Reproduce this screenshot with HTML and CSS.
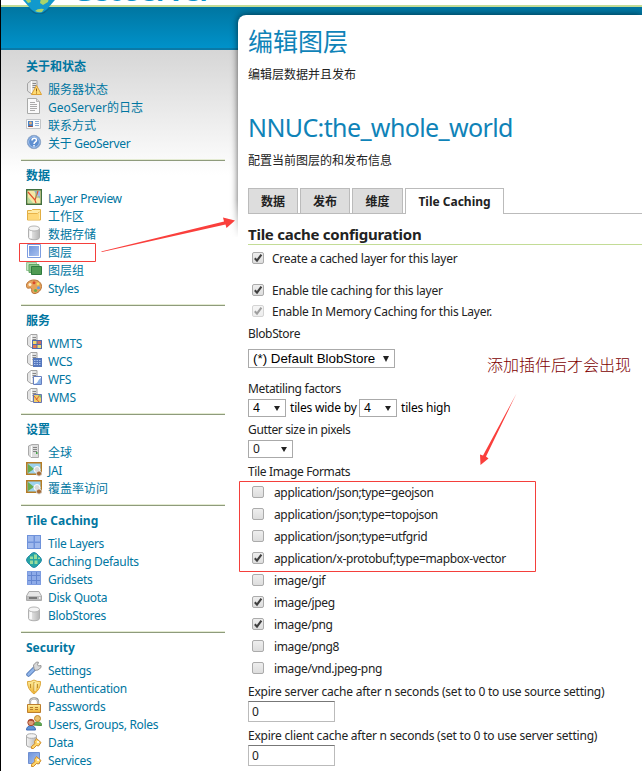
FILE: index.html
```html
<!DOCTYPE html>
<html lang="zh">
<head>
<meta charset="utf-8">
<title>GeoServer</title>
<link rel="stylesheet" href="styles.css">
</head>
<body>
<svg class="defs" width="0" height="0">
  <defs>
    <linearGradient id="gBlue" x1="0" y1="0" x2="1" y2="1"><stop offset="0" stop-color="#6f94da"/><stop offset="1" stop-color="#a9c2f0"/></linearGradient>
    <linearGradient id="gGrey" x1="0" y1="0" x2="1" y2="0"><stop offset="0" stop-color="#f4f4f4"/><stop offset="1" stop-color="#b4b4b4"/></linearGradient>
    <linearGradient id="gGold" x1="0" y1="0" x2="0" y2="1"><stop offset="0" stop-color="#fff0a0"/><stop offset="1" stop-color="#eeb030"/></linearGradient>
    <linearGradient id="gBox" x1="0" y1="0" x2="0" y2="1"><stop offset="0" stop-color="#efefef"/><stop offset="1" stop-color="#dcdcdc"/></linearGradient>
  </defs>
  <symbol id="server" viewBox="0 0 16 16"><path d="M1.500 3.500 5 .5h6v13H5L1.500 11z" fill="#e4e4e4" stroke="#a4a4a4"/><path d="M5.500 1v12" stroke="#fff"/><path d="M6.500 3.500h3.500M6.500 5.500h3.500M6.500 7.500h3.500" stroke="#888"/></symbol>
  <symbol id="status" viewBox="0 0 16 16"><use href="#server"/><path d="M10.500 5.500 15.500 14.500H5.500z" fill="#ffdc72" stroke="#dda034" stroke-linejoin="round"/><path d="M10.500 8.500v3M10.500 12.500v1" stroke="#8c5b14"/></symbol>
  <symbol id="page" viewBox="0 0 16 16"><path d="M1.500.5h9l3 3v12h-12z" fill="#fafafa" stroke="#a9aaa9"/><path d="M10.500.5v3h3" fill="#ddd" stroke="#b5b5b5"/><path d="M4 4.500h5M4 6.500h7M4 8.500h7M4 10.500h7M4 12.500h5" stroke="#aaa"/></symbol>
  <symbol id="card" viewBox="0 0 16 16"><path d="M.5 3.500h14v9H.5z" fill="#fafafa" stroke="#c2c5c8"/><path d="M2 5h5v6H2z" fill="#4580c6"/><circle cx="4.500" cy="7" r="1.500" fill="#e4b07c"/><path d="M2.500 10.500h4" stroke="#a44b31"/><path d="M9 5.500h4M9 7.500h4M9 9.500h4" stroke="#8bacd3"/></symbol>
  <symbol id="help" viewBox="0 0 16 16"><circle cx="8" cy="8" r="6.700" fill="#5f8fd0" stroke="#93a9c8"/><circle cx="8" cy="8" r="5.400" fill="none" stroke="#a9c5ec"/><path d="M6 6.500c0-3 4.500-3 4.500-.3C10.500 8 8 7.800 8 10M8 11v1.500" fill="none" stroke="#fff" stroke-width="1.500"/></symbol>
  <symbol id="preview" viewBox="0 0 16 16"><path d="M.7.7h14.600v14.600H.7z" fill="#f4e8a6" stroke="#426f3e" stroke-width="1.400"/><path d="M8 2h6v8z" fill="#9dbbe8"/><path d="M2 8l5 6H2z" fill="#b5dca0"/><path d="M2 3l7 8 1 3M12 2l-3 9" fill="none" stroke="#de512e" stroke-width="1.200"/><path d="M10 2v6h4" fill="none" stroke="#8fb07a"/></symbol>
  <symbol id="folder" viewBox="0 0 16 16"><path d="M1.500 13V3.500h4l1-1h8V13z" fill="#ffeaa5" stroke="#e2ae42"/><path d="M1.500 6.500h10l2-1.500" fill="none" stroke="#e8b34a"/><path d="M2 7h11v5.500H2z" fill="#ffd878"/></symbol>
  <symbol id="store" viewBox="0 0 16 16"><path d="M2.500 3.500v9c0 3 11 3 11 0v-9" fill="url(#gGrey)" stroke="#b0b0b0"/><ellipse cx="8" cy="3.500" rx="5.500" ry="2.500" fill="#f4f4f4" stroke="#b5b5b5"/><path d="M5 6v7" stroke="#fff" stroke-width="1.500"/></symbol>
  <symbol id="layer" viewBox="0 0 16 16"><path d="M1.500 1.500h13v13h-13z" fill="#fff" stroke="#7d9ce0"/><path d="M3 3h10v10H3z" fill="url(#gBlue)"/></symbol>
  <symbol id="layers" viewBox="0 0 16 16"><path d="M.5 1.500h10v8H.5z" fill="#c4e5bf" stroke="#98c79a"/><path d="M3 3.500h10v8H3z" fill="#8ac489" stroke="#62a864"/><path d="M5.500 5.500h10v8h-10z" fill="#509b53" stroke="#307b3e"/></symbol>
  <symbol id="palette" viewBox="0 0 16 16"><path d="M8 1C3 1 0 4 .5 7.500 1 10 3 9 4.500 9c2.500 0 0 3 2 5 2.500 2 9-1.500 9-6.500C15.500 3.500 12 1 8 1z" fill="#e6a25b" stroke="#b87335"/><circle cx="4" cy="5.500" r="1.500" fill="#fff2d7"/><circle cx="8" cy="3.700" r="1.500" fill="#d94b2b"/><circle cx="12" cy="5" r="1.400" fill="#f5dd5b"/><circle cx="12.500" cy="8.700" r="1.500" fill="#609ce0"/><circle cx="9.500" cy="11.500" r="1.600" fill="#70ad47"/></symbol>
  <symbol id="wmts" viewBox="0 0 16 16"><use href="#server"/><path d="M6 6h10v9H6z" fill="#526cad"/><path d="M7 7h3.500v3H7z" fill="#f2d96a"/><path d="M11.500 7H15v3h-3.500z" fill="#ce7062"/><path d="M7 11h3.500v3H7z" fill="#e4794e"/><path d="M11.500 11H15v3h-3.500z" fill="#eee077"/></symbol>
  <symbol id="wcs" viewBox="0 0 16 16"><use href="#server"/><path d="M7 6h9v9H7z" fill="#5577bd"/><path d="M8 8.500h7M8 10.500h7M8 12.500h7" stroke="#a9c2ee" stroke-dasharray="1.500 1"/></symbol>
  <symbol id="wfs" viewBox="0 0 16 16"><use href="#server"/><path d="M7.500 6.500h8v8h-8z" fill="#fff" stroke="#667fc0"/><path d="M15 8v6H8c5-1 3-4 7-6z" fill="#8db2e7"/></symbol>
  <symbol id="wms" viewBox="0 0 16 16"><use href="#server"/><path d="M7.500 6.500h8v8h-8z" fill="#f1cf67" stroke="#6573b3"/><path d="M8 8l5 6M14 7l-4 5" stroke="#d95b35"/><path d="M12 7h3v3z" fill="#7dbe78"/></symbol>
  <symbol id="host" viewBox="0 0 16 16"><path d="M2.500 3 6 1.500h6.500v13H5L2.500 12z" fill="#ddd" stroke="#aaa"/><path d="M5.500 3v11" stroke="#fff"/><path d="M7 4.500h4M7 6.500h4M7 8.500h4" stroke="#858585"/><path d="M10 9h1.500v2H10z" fill="#43a547"/></symbol>
  <symbol id="jai" viewBox="0 0 16 16"><path d="M.8 1.800h14.500v11.500H.8z" fill="#9cd2ed" stroke="#b57c25" stroke-width="1.600"/><path d="M2 3l6 5-6 4z" fill="#67ad50"/><circle cx="11" cy="8.500" r="3" fill="#d8d8d8" stroke="#fff"/><circle cx="13" cy="12.500" r="2.600" fill="#a66b37" stroke="#ddd"/></symbol>
  <symbol id="tiles" viewBox="0 0 16 16"><path d="M1 1h14v14H1z" fill="#6f92da"/><path d="M2 2h5.500v5.500H2zM9 2h5v5.500H9zM2 9h5.500v5H2zM9 9h5v5H9z" fill="#9fb9ed"/></symbol>
  <symbol id="caching" viewBox="0 0 16 16"><path d="M8 .5Q10 .5 12.500 3.500 15.500 6 15.500 8T12.500 12.500Q10 15.500 8 15.500T3.500 12.500Q.5 10 .5 8T3.500 3.500Q6 .5 8 .5z" fill="#27a5a2" stroke="#2189a8"/><path d="M4 4.500h3v2.500H4zM8 2.500h3V7H8zM4 8.500h3V12H4zM8.500 8.500h3V12h-3zM12 5.500h2V7h-2z" fill="#99dc9c"/></symbol>
  <symbol id="grid" viewBox="0 0 16 16"><path d="M1 1h14v14H1z" fill="#8eabe8"/><path d="M1 5.500h14M1 10.500h14M5.500 1v14M10.500 1v14" stroke="#6486d0"/><path d="M1.500 1.500h13v13h-13z" fill="none" stroke="#7d9ce0"/></symbol>
  <symbol id="disk" viewBox="0 0 16 16"><path d="M.5 8 3 3.500h10L15.500 8v4.500H.5z" fill="#e6e6e6" stroke="#aaa"/><path d="M1 8h14v4H1z" fill="#bbb"/><path d="M3 10h8" stroke="#777" stroke-width="2"/><path d="M13 9h1.500v2H13z" fill="#eee"/></symbol>
  <symbol id="wrench" viewBox="0 0 16 16"><path d="M2.500 13.500 9 7" stroke="#537ab7" stroke-width="4.500" stroke-linecap="round"/><path d="M2.500 13.500 9 7" stroke="#8fb4e9" stroke-width="2.600" stroke-linecap="round"/><path d="M8 7.500 7.500 4l3-3 2 .3-1 2.500 1 1.200L15 4.500v2l-3 2.500-3 .3z" fill="#d9d9d9" stroke="#959595"/></symbol>
  <symbol id="shield" viewBox="0 0 16 16"><path d="M1.500 2.500Q5 3 8 1q3 2 6.500 1.500Q15 10 8 15 1 10 1.500 2.500z" fill="url(#gGold)" stroke="#dda83b"/><path d="M8 3v9.500M4.500 5v4M11.500 5v4" stroke="#bb8e30"/><path d="M9 4v8" stroke="#fff9d2"/></symbol>
  <symbol id="lock" viewBox="0 0 16 16"><path d="M4 8V4.500C4 .2 12 .2 12 4.500V8" fill="none" stroke="#929292" stroke-width="2.200"/><path d="M4 7V4.500C4 .8 12 .8 12 4.500V7" fill="none" stroke="#dedede"/><path d="M1.500 7.500h13v8h-13z" fill="url(#gGold)" stroke="#bd7e2d"/><path d="M4 10.500h3M4 12.500h3M9 10.500h3M9 12.500h3" stroke="#b47b2a"/></symbol>
  <symbol id="users" viewBox="0 0 16 16"><path d="M7.500 10c0-4 8-4 8-.5v1z" fill="#66ad53" stroke="#478c3d"/><circle cx="11.500" cy="3.500" r="3" fill="#eac16d" stroke="#be852d"/><path d="M.5 15c0-6 9-6 9 0z" fill="#5f94d7" stroke="#3c68b4"/><circle cx="5" cy="7.500" r="3.200" fill="#df9e78" stroke="#a7472f"/><path d="M2 7c1-3 5-3 6 0-2-1-4-2-6 0z" fill="#a13f2b"/></symbol>
  <symbol id="key" viewBox="0 0 16 16"><path d="m10.500 5.500 4.500 4-2.500 3.500-2-.5-3 3H5.500v-2l3.500-3-.5-2z" fill="#ffd66a" stroke="#ce8b2a"/><circle cx="12" cy="9" r="1" fill="#fff"/></symbol>
  <symbol id="data" viewBox="0 0 16 16"><path d="M.5 3v9c0 3 10 3 10 0V3" fill="url(#gGrey)" stroke="#aaa"/><ellipse cx="5.500" cy="3" rx="5" ry="2.300" fill="#f4f4f4" stroke="#aaa"/><use href="#key"/></symbol>
  <symbol id="services" viewBox="0 0 16 16"><path d="M2.500 1.500h11v11h-11z" fill="url(#gBlue)" stroke="#6e8fd1"/><use href="#key"/></symbol>
  <symbol id="box" viewBox="0 0 12 12"><rect x=".5" y=".5" width="11" height="11" rx="1.500" fill="url(#gBox)" stroke="#ababab"/></symbol>
  <symbol id="tick" viewBox="0 0 12 12"><use href="#box"/><path d="M2.800 6.200 5 8.600 9.400 2.600" fill="none" stroke="#3f3f3f" stroke-width="2.100"/></symbol>
</svg>

<header class="top">
  <svg class="globe" viewBox="0 0 44 28"><path d="M0 7 13 22Q22 32 31 22L44 7z" fill="#1199cd"/><path d="M10 21 14 24Q22 31 30 24L34 21 31 24Q22 33 13 24z" fill="#0b6289"/><path d="M7 12h6l1 4-3 1zM24 12h8l-1 4-5 3-3-2zM18 25q3-3 9-2l-2 3q-3 1-7-1z" fill="#a8d46a"/></svg>
  <span class="brand">GeoServer</span>
</header>
<div class="band"></div>

<div class="page">
  <nav class="side">
    <section><h2>关于和状态</h2><ul>
      <li><svg><use href="#status"/></svg><a class="cn">服务器状态</a></li>
      <li><svg><use href="#page"/></svg><a class="cn">GeoServer的日志</a></li>
      <li><svg><use href="#card"/></svg><a class="cn">联系方式</a></li>
      <li><svg><use href="#help"/></svg><a>关于 GeoServer</a></li></ul></section>
    <section><h2>数据</h2><ul>
      <li><svg><use href="#preview"/></svg><a>Layer Preview</a></li>
      <li><svg><use href="#folder"/></svg><a class="cn">工作区</a></li>
      <li><svg><use href="#store"/></svg><a class="cn">数据存储</a></li>
      <li><svg><use href="#layer"/></svg><a class="cn">图层</a></li>
      <li><svg><use href="#layers"/></svg><a class="cn">图层组</a></li>
      <li><svg><use href="#palette"/></svg><a>Styles</a></li></ul></section>
    <section><h2>服务</h2><ul>
      <li><svg><use href="#wmts"/></svg><a>WMTS</a></li>
      <li><svg><use href="#wcs"/></svg><a>WCS</a></li>
      <li><svg><use href="#wfs"/></svg><a>WFS</a></li>
      <li><svg><use href="#wms"/></svg><a>WMS</a></li></ul></section>
    <section><h2>设置</h2><ul>
      <li><svg><use href="#host"/></svg><a class="cn">全球</a></li>
      <li><svg><use href="#jai"/></svg><a>JAI</a></li>
      <li><svg><use href="#jai"/></svg><a class="cn">覆盖率访问</a></li></ul></section>
    <section><h2>Tile Caching</h2><ul>
      <li><svg><use href="#tiles"/></svg><a>Tile Layers</a></li>
      <li><svg><use href="#caching"/></svg><a>Caching Defaults</a></li>
      <li><svg><use href="#grid"/></svg><a>Gridsets</a></li>
      <li><svg><use href="#disk"/></svg><a>Disk Quota</a></li>
      <li><svg><use href="#store"/></svg><a>BlobStores</a></li></ul></section>
    <section><h2>Security</h2><ul>
      <li><svg><use href="#wrench"/></svg><a>Settings</a></li>
      <li><svg><use href="#shield"/></svg><a>Authentication</a></li>
      <li><svg><use href="#lock"/></svg><a>Passwords</a></li>
      <li><svg><use href="#users"/></svg><a>Users, Groups, Roles</a></li>
      <li><svg><use href="#data"/></svg><a>Data</a></li>
      <li><svg><use href="#services"/></svg><a>Services</a></li></ul></section>
  </nav>

  <main class="main">
    <h1>编辑图层</h1>
    <p class="desc">编辑层数据并且发布</p>
    <h1 class="name">NNUC:the_whole_world</h1>
    <p class="desc">配置当前图层的和发布信息</p>
    <div class="tabs"><span class="tab">数据</span><span class="tab">发布</span><span class="tab">维度</span><span class="tab on">Tile Caching</span></div>
    <h3>Tile cache configuration</h3>
    <div class="check first"><svg><use href="#tick"/></svg><span>Create a cached layer for this layer</span></div>
    <div class="check second"><svg><use href="#tick"/></svg><span>Enable tile caching for this layer</span></div>
    <div class="check third"><svg class="dim"><use href="#tick"/></svg><span>Enable In Memory Caching for this Layer.</span></div>
    <div class="label blob">BlobStore</div>
    <div class="select wide"><span>(*) Default BlobStore</span><i></i></div>
    <div class="label meta">Metatiling factors</div>
    <div class="inline"><div class="select"><span>4</span><i></i></div><span class="by">tiles wide by</span><div class="select"><span>4</span><i></i></div><span class="high">tiles high</span></div>
    <div class="label gutter">Gutter size in pixels</div>
    <div class="select zero"><span>0</span><i></i></div>
    <div class="label formats">Tile Image Formats</div>
    <div class="list">
      <div class="format"><svg><use href="#box"/></svg><span>application/json;type=geojson</span></div>
      <div class="format"><svg><use href="#box"/></svg><span>application/json;type=topojson</span></div>
      <div class="format"><svg><use href="#box"/></svg><span>application/json;type=utfgrid</span></div>
      <div class="format"><svg><use href="#tick"/></svg><span>application/x-protobuf;type=mapbox-vector</span></div>
      <div class="format"><svg><use href="#box"/></svg><span>image/gif</span></div>
      <div class="format"><svg><use href="#tick"/></svg><span>image/jpeg</span></div>
      <div class="format"><svg><use href="#tick"/></svg><span>image/png</span></div>
      <div class="format"><svg><use href="#box"/></svg><span>image/png8</span></div>
      <div class="format"><svg><use href="#box"/></svg><span>image/vnd.jpeg-png</span></div>
    </div>
    <div class="label expire">Expire server cache after n seconds (set to 0 to use source setting)</div>
    <div class="field">0</div>
    <div class="label expire client">Expire client cache after n seconds (set to 0 to use server setting)</div>
    <div class="field">0</div>
  </main>
</div>

<svg class="marks" viewBox="0 0 642 771">
  <g fill="none" stroke="#f43f3b"><path d="M19.500 243.500h76v18h-76zM239.500 481.500h296v90h-296z"/></g>
  <path d="M101 251.500 224 221.500 223 217.500 235 220.500 226.500 228 225.500 224.500 102 252z" fill="#fa3f3c"/>
  <path d="M516.500 393.500 486 456.500 488.500 458.500 480.500 465 480 454.500 483 455.500z" fill="#fa3f3c"/>
</svg>
<div class="note">添加插件后才会出现</div>
</body>
</html>
```

FILE: styles.css
```css
* { box-sizing: border-box; }
body {
  position: relative;
  width: 642px;
  height: 771px;
  margin: 0;
  overflow: hidden;
  border-left: 1px solid #000;
  background: #fff;
  color: #222;
  font: 12px/18px "Noto Sans", "Noto Sans CJK SC", sans-serif;
  white-space: nowrap;
}
h1, h2, h3, p, ul { margin: 0; padding: 0; list-style: none; }
svg { flex: none; }
.defs { position: absolute; }
.top { height: 7px; border-bottom: 2px solid #c3dc96; }
.globe { position: absolute; z-index: 2; left: 16px; top: -14px; width: 44px; height: 28px; }
.brand { position: absolute; left: 72px; top: -25px; font: bold 27px/32px "Open Sans", sans-serif; color: #0a93c9; }
.band { height: 43px; background: linear-gradient(#0076a1, #0092ca); border-bottom: 2px solid #0a79a7; }
.page {
  display: flex;
  height: 721px;
  background: linear-gradient(#d6d6d6, #fff 125px);
}
.side { flex: none; width: 204px; margin-left: 20px; }
.side section {
  padding: 7px 0 6px 5px;
  border-top: 1px solid #e4ebd2;
  box-shadow: inset 0 1px #8e9b7c;
}
.side section:first-child { padding-top: 8px; border: 0; box-shadow: none; }
.side h2 { font-size: 12px; line-height: 18px; color: #0076a1; margin-bottom: 5px; }
.side li { display: flex; align-items: center; height: 18px; gap: 6px; color: #0076a1; letter-spacing: -.3px; }
.side li .cn { letter-spacing: 0; }
.side li svg { width: 16px; height: 16px; margin-top: -4px; }
.main {
  position: relative;
  z-index: 1;
  flex: none;
  width: 404px;
  height: 756px;
  margin: -35px 0 0 13px;
  padding: 9px 0 0 10px;
  border-radius: 8px 0 0 0;
  background: #fff;
}
.main::before {
  content: "";
  position: absolute;
  z-index: -1;
  inset: 0 0 auto 0;
  height: 240px;
  border-radius: 8px 0 0 0;
  box-shadow: 0 0 7px rgba(0, 0, 0, .65);
  clip-path: inset(-10px 0 18px -10px);
}
.main::after {
  content: "";
  position: absolute;
  z-index: -1;
  left: -10px;
  top: 185px;
  width: 10px;
  height: 38px;
  background: linear-gradient(rgba(255, 255, 255, 0), #fff);
}
h1 { font-size: 25px; line-height: 34px; font-weight: 400; color: #0f83b8; }
.desc { margin-top: 8px; }
.name { margin-top: 26px; letter-spacing: -.62px; }
.tabs { display: flex; gap: 2px; margin-top: 18px; height: 26px; border-bottom: 1px solid #bbb; }
.tab { width: 50px; height: 25px; border: 1px solid #bbb; border-bottom: 0; background: #ddd; font-weight: bold; line-height: 25px; text-align: center; }
.tab:nth-child(3) { width: 51px; }
.tab.on { width: 99px; height: 26px; background: #fff; }
h3 { margin-top: 11px; border-bottom: 1px solid #c3dc96; font-size: 15px; line-height: 19px; letter-spacing: -.25px; }
.check, .format { display: flex; align-items: center; gap: 8px; height: 18px; padding-left: 4px; letter-spacing: -.25px; }
.check span, .format span { padding-top: 2px; }
.check svg, .format svg { width: 12px; height: 12px; }
.format { height: 22px; gap: 10px; letter-spacing: -.36px; }
.label { padding-top: 1px; height: 18px; letter-spacing: -.35px; }
.dim { opacity: .5; }
.first { margin-top: 4px; }
.second { margin-top: 14px; }
.third { margin-top: 3px; }
.blob { margin-top: 4px; }
.meta { margin-top: 11px; }
.gutter { margin-top: 3px; }
.formats { margin-top: 4px; }
.list { margin-top: 1px; }
.expire { margin-top: 3px; letter-spacing: -.22px; }
.client { margin-top: 4px; }
.select { display: flex; align-items: center; justify-content: space-between; width: 38px; height: 18px; padding: 0 5px 0 4px; border: 1px solid #aaa; background: #fff; }
.select i { border: 3px solid transparent; border-top: 5px solid #222; border-bottom: 0; }
.wide { width: 147px; height: 19px; margin-top: 7px; padding-right: 5px; font: 13.333px/17px "Liberation Sans", sans-serif; color: #000; }
.wide i { border-width: 6px 3px 0; }
.inline { display: flex; align-items: center; height: 18px; margin-top: 2px; letter-spacing: -.2px; color: #000; }
.by { width: 73px; padding-left: 4px; }
.high { padding-left: 4px; }
.zero { width: 45px; margin-top: 2px; }
.field { width: 87px; height: 21px; margin-top: 1px; padding-left: 3px; border: 1px solid #bbb; border-top-color: #777; line-height: 19px; }
.marks { position: absolute; z-index: 3; left: -1px; top: 0; width: 642px; height: 771px; }
.note { position: absolute; z-index: 3; left: 486px; top: 352px; font: 300 16px/24px "Noto Sans CJK SC", sans-serif; color: #800000; }
```
